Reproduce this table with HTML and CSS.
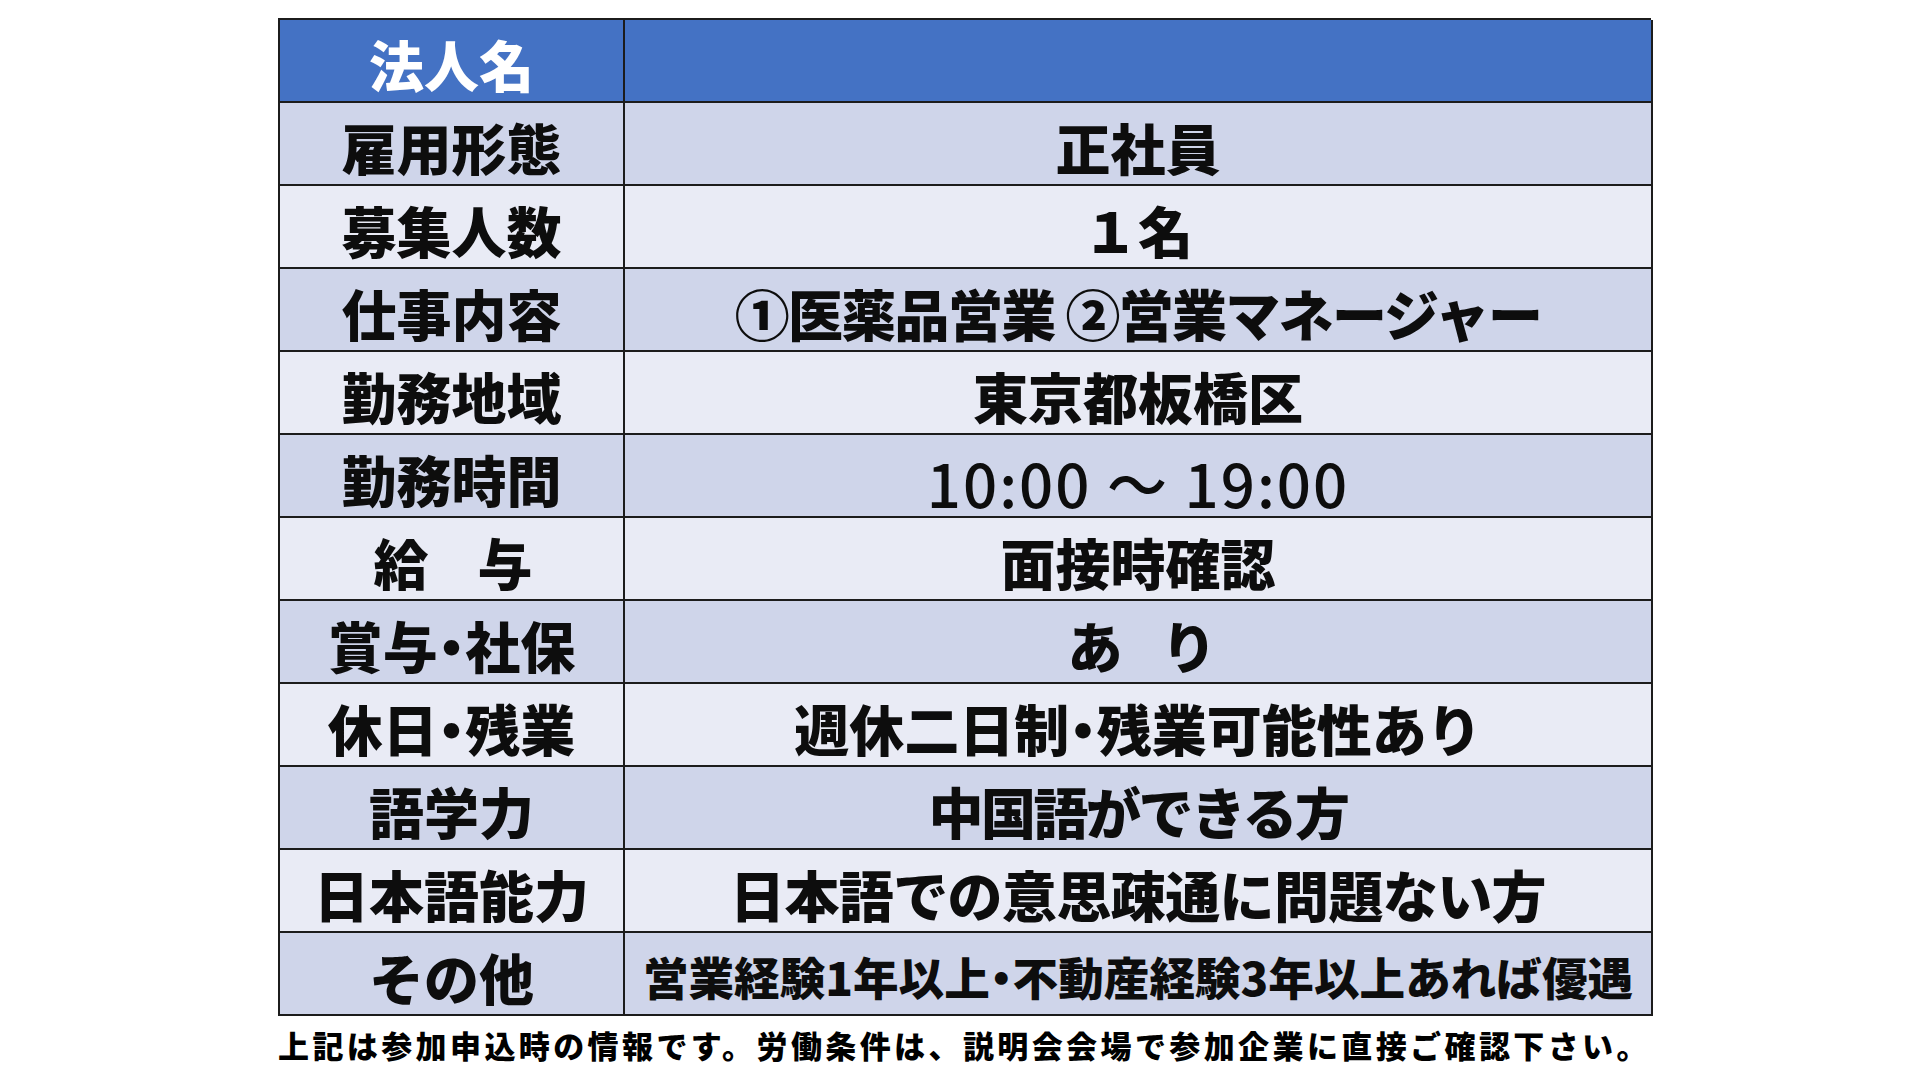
FILE: index.html
```html
<!DOCTYPE html>
<html lang="ja">
<head>
<meta charset="utf-8">
<title>求人情報</title>
<link rel="stylesheet" href="styles.css">
</head>
<body>
<div class="page">
  <div class="sheet">
    <div class="cell label head">法人名</div>
    <div class="cell value head"></div>

    <div class="cell label dark">雇用形態</div>
    <div class="cell value dark">正社員</div>

    <div class="cell label light">募集人数</div>
    <div class="cell value light">１名</div>

    <div class="cell label dark">仕事内容</div>
    <div class="cell value dark job">①医薬品営業 ②営業マネージャー</div>

    <div class="cell label light">勤務地域</div>
    <div class="cell value light">東京都板橋区</div>

    <div class="cell label dark">勤務時間</div>
    <div class="cell value dark time">10:00 ～ 19:00</div>

    <div class="cell label light gap-label">給　与</div>
    <div class="cell value light">面接時確認</div>

    <div class="cell label dark">賞与<span class="dot">・</span>社保</div>
    <div class="cell value dark gap-value">あ　り</div>

    <div class="cell label light">休日<span class="dot">・</span>残業</div>
    <div class="cell value light">週休二日制<span class="dot">・</span>残業可能性あり</div>

    <div class="cell label dark">語学力</div>
    <div class="cell value dark lang">中国語ができる方</div>

    <div class="cell label light">日本語能力</div>
    <div class="cell value light jp">日本語での意思疎通に問題ない方</div>

    <div class="cell label dark">その他</div>
    <div class="cell value dark small">営業経験1年以上<span class="dot">・</span>不動産経験3年以上あれば優遇</div>
  </div>
  <p class="note">上記は参加申込時の情報です。労働条件は、説明会会場で参加企業に直接ご確認下さい。</p>
</div>
</body>
</html>
```
FILE: styles.css
```css
html, body {
  margin: 0;
  padding: 0;
  background: #ffffff;
}

body {
  width: 1920px;
  height: 1080px;
  overflow: hidden;
  font-family: "Noto Sans CJK JP", "Noto Sans", sans-serif;
  color: #000000;
}

.page {
  padding: 18px 0 0 278px;
}

.sheet {
  width: 1373px;
  display: grid;
  grid-template-columns: 345px 1028px;
  grid-auto-rows: 83px;
  border-top: 2px solid #1c1c1c;
  border-left: 2px solid #1c1c1c;
  box-sizing: border-box;
}

.cell {
  border-right: 2px solid #1c1c1c;
  border-bottom: 2px solid #1c1c1c;
  display: flex;
  align-items: center;
  justify-content: center;
  font-size: 55px;
  font-weight: 900;
  line-height: 1;
  padding-top: 5px;
  box-sizing: border-box;
  white-space: nowrap;
  color: #0d0d0d;
}

.head {
  background: #4472c4;
  color: #ffffff;
}

.dark {
  background: #cfd5ea;
}

.light {
  background: #e9ebf5;
}

.dot {
  font-feature-settings: "palt";
}

.job {
  letter-spacing: -1.7px;
}

.lang {
  letter-spacing: -2.5px;
}

.jp {
  letter-spacing: -0.6px;
}

.gap-label {
  letter-spacing: -3px;
}

.gap-value {
  letter-spacing: -8px;
}

.time {
  font-weight: 500;
  font-size: 60px;
  letter-spacing: 2px;
  padding-top: 12px;
}

.small {
  font-size: 45.6px;
  padding-top: 6px;
}

.note {
  margin: 13px 0 0 0;
  font-size: 31px;
  font-weight: 900;
  line-height: 31px;
  letter-spacing: 3.4px;
  white-space: nowrap;
  color: #000000;
}
```
